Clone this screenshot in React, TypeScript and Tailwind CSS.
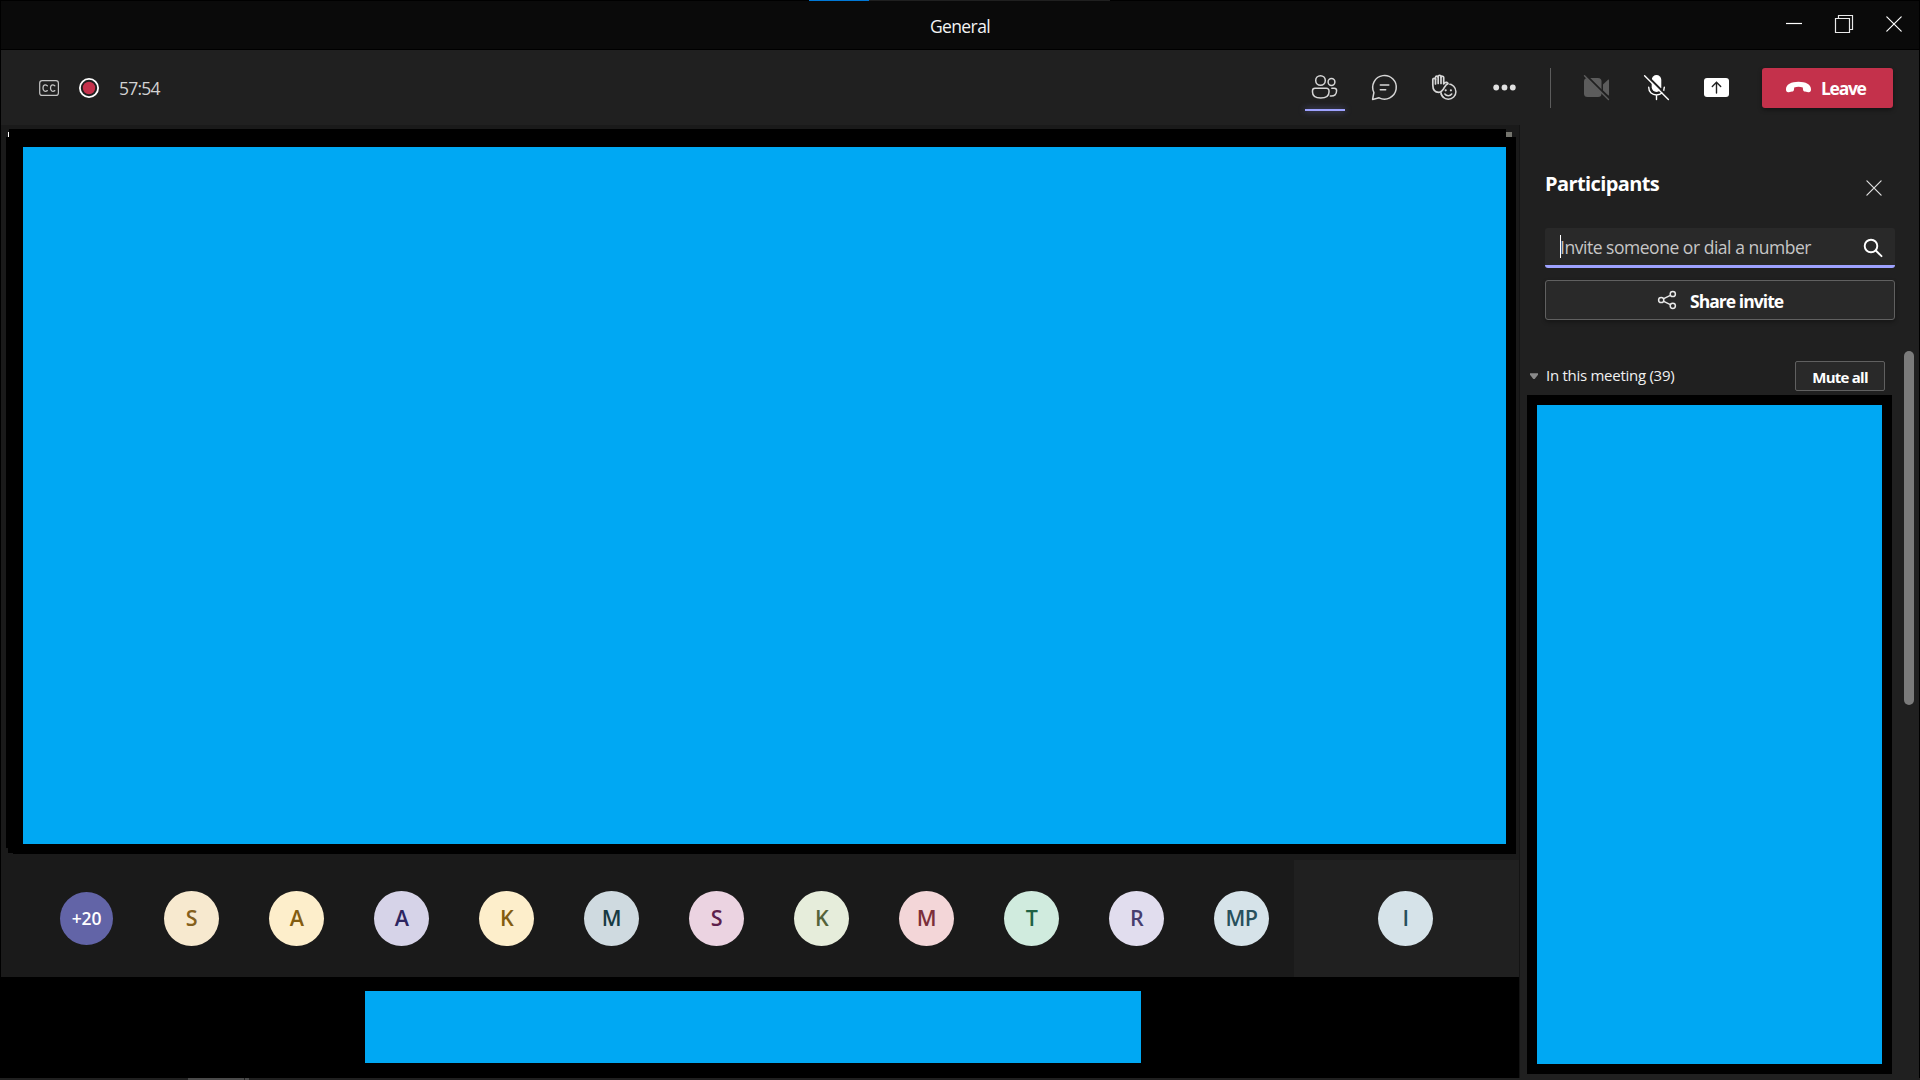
import type { ReactNode } from "react";

type IconProps = { box: string; className?: string; children: ReactNode };

function Icon({ box, className = "size-8", children }: IconProps) {
  return (
    <svg viewBox={box} className={`shrink-0 ${className}`} fill="none" stroke="#d6d6d6" strokeWidth="1.5" strokeLinecap="round" strokeLinejoin="round">
      {children}
    </svg>
  );
}

function TitleBar() {
  return (
    <header className="flex h-[50px] shrink-0 flex-col border-b border-black bg-[#0a0a0a]">
      <div className="flex h-px bg-black">
        <div className="ml-[808px] w-[60px] bg-[#0078d7]" />
        <div className="w-[241px] bg-[#202020]" />
      </div>
      <div className="grid flex-1 grid-cols-[1fr_auto_1fr]">
        <div />
        <h1 className="pt-[13px] text-[17.5px] leading-6 tracking-[-0.6px] text-[#f3f3f3]">General</h1>
        <div className="flex justify-end gap-[18px] pt-[7px] pr-[9px]">
          <Icon box="1778 8 32 32"><path d="M1786 23.5H1802" stroke="#fff" strokeWidth="1.2" strokeLinecap="butt" /></Icon>
          <Icon box="1828 8 32 32">
            <path d="M1835.5 18.5h14v14h-14z M1838.5 18V15.5H1852.5V29.5H1850" stroke="#e8e8e8" strokeWidth="1.2" strokeLinejoin="miter" />
          </Icon>
          <Icon box="1878 8 32 32"><path d="M1886.800 16.800L1901.200 31.200M1901.200 16.800L1886.800 31.200" stroke="#fff" strokeWidth="1.2" /></Icon>
        </div>
      </div>
    </header>
  );
}

function Toolbar() {
  return (
    <div className="flex h-[75px] shrink-0 items-start bg-[#202020] pt-[21px] pr-[26px] pl-[32px]">
      <Icon box="33 71 32 32">
        <rect x="39.700" y="80.700" width="18.700" height="14.700" rx="2.500" stroke="#c4c4c4" strokeWidth="1.200" />
        <path d="M47.300 85.800C45 84 43 85.200 43 88s2 4.200 4.300 2.600M54.800 85.800C52.500 84 50.500 85.200 50.500 88s2 4.200 4.300 2.600" stroke="#c4c4c4" strokeWidth="1.300" />
      </Icon>
      <Icon box="73 71 32 32" className="ml-2 size-8">
        <circle cx="89" cy="88" r="9.100" stroke="#fff" strokeWidth="1.800" />
        <circle cx="89" cy="88" r="6.200" fill="#c4314b" stroke="none" />
      </Icon>
      <span className="ml-[14px] pt-[5px] text-[17.5px] leading-6 tracking-[-0.75px] text-[#d2d2d2]">57:54</span>
      <div className="ml-auto flex items-start">
        <div className="flex gap-7">
          <div className="flex flex-col items-center">
            <Icon box="1309 71 32 32">
              <circle cx="1320.500" cy="80.500" r="4.800" />
              <circle cx="1331.500" cy="82" r="3.400" />
              <path d="M1315 88.200h11.500a2.500 2.500 0 0 1 2.500 2.500v1.300c0 4-3.500 6-8.300 6s-8.200-2-8.200-6v-1.300a2.500 2.500 0 0 1 2.500-2.500zM1331.800 88.200h2.500a2.300 2.300 0 0 1 2.300 2.300c0 3.800-2 5.900-6.300 5.500" />
            </Icon>
            <div className="-mx-1 mt-[6px] h-[2px] w-10 bg-[#9ea2ff] shadow-[0_0_6px_#6264a7]" />
          </div>
          <Icon box="1369 71 32 32">
            <path d="M1373.900 92.500a11.800 11.800 0 1 1 5.200 5.300l-6.500 1.600z M1380.300 84.900h8.500M1380.300 89.800h5.400" />
          </Icon>
          <Icon box="1429 71 32 32">
            <circle cx="1448.300" cy="91.700" r="7.600" />
            <path d="M1444.900 94c1.500 2.300 5.300 2.300 6.800 0" />
            <circle cx="1450.900" cy="90.300" r="1.100" fill="#d6d6d6" stroke="none" />
            <path d="M1432.800 79.500c0-1.700 2.600-1.700 2.700 0v-2.200c.1-1.700 2.600-1.700 2.700 0v-.8c.1-1.700 2.700-1.700 2.800 0v.9c.1-1.600 2.700-1.600 2.700.2v6.200l1.300-1.100c1-.8 2.600-.3 3 .9-1.500.5-2.500 1.800-3.600 3.800-1.600 3-3.200 4.900-5.600 4.900-4 0-6-3.200-6-7.300z" fill="#202020" stroke="#202020" strokeWidth="3" />
            <path d="M1432.800 79.500c0-1.700 2.600-1.700 2.700 0v-2.200c.1-1.700 2.600-1.700 2.700 0v-.8c.1-1.700 2.700-1.700 2.800 0v.9c.1-1.600 2.700-1.600 2.700.2v6.200l1.300-1.100c1-.8 2.600-.3 3 .9-1.500.5-2.500 1.800-3.600 3.800-1.600 3-3.200 4.900-5.600 4.900-4 0-6-3.200-6-7.300z" fill="#202020" strokeWidth="1.700" />
            <path d="M1435.500 79v5M1438.200 77v6.500M1441 77v6.500" strokeWidth="1.700" />
            <circle cx="1445.700" cy="90.300" r="1.100" fill="#d6d6d6" stroke="none" />
            <path d="M1440.900 92.500c.3 2 1.300 3.800 2.700 5" />
          </Icon>
          <Icon box="1489 71 32 32">
            <g fill="#e0e0e0" stroke="none">
              <circle cx="1496.200" cy="87.500" r="2.900" />
              <circle cx="1504.500" cy="87.500" r="2.900" />
              <circle cx="1512.800" cy="87.500" r="2.900" />
            </g>
          </Icon>
        </div>
        <div className="-mt-[3px] mr-[30px] ml-[29px] h-10 w-px bg-[#5c5c5c]" />
        <div className="flex gap-7">
          <Icon box="1581 71 32 32">
            <g fill="#5c5c5c" stroke="none">
              <rect x="1584" y="78" width="17.500" height="19" rx="3.500" />
              <path d="M1603 84.500l5-4.700c.5-.4 1-.2 1 .5v14.400c0 .7-.5.900-1 .5l-5-4.700z" />
            </g>
            <path d="M1585.500 74.700l24.500 24.500" stroke="#202020" strokeWidth="2.200" />
            <path d="M1584.500 75.700l24 23.800" stroke="#5c5c5c" strokeWidth="1.400" />
          </Icon>
          <Icon box="1641 71 32 32">
            <rect x="1651.700" y="75" width="9.600" height="17" rx="4.800" fill="#fff" stroke="none" />
            <path d="M1648.700 87.300c0 5 3.600 7.700 7.800 7.700s7.800-2.700 7.800-7.700M1656.500 95.300v4.300" stroke="#fff" strokeWidth="1.400" />
            <path d="M1646 74.700l24 24" stroke="#202020" strokeWidth="2.200" />
            <path d="M1644.600 75.700l23.800 23.800" stroke="#fff" strokeWidth="1.400" />
          </Icon>
          <Icon box="1701 71 32 32">
            <rect x="1704" y="78" width="25" height="19" rx="3" fill="#fff" stroke="none" />
            <path d="M1716.500 93V82.300M1712.300 86.500l4.200-4.300 4.200 4.300" stroke="#202020" strokeWidth="1.400" />
          </Icon>
        </div>
        <button className="-mt-[3px] ml-[29px] flex h-10 w-[131px] rounded-[3px] bg-[#c4314b] pt-[3px] pl-5 text-white shadow-[0_2px_4px_#00000066]">
          <Icon box="1782 71 32 32">
            <path d="M1786 89.500c-.3-5 5.500-7.700 12.500-7.700s12.800 2.700 12.500 7.700c0 2-1 3-2.800 2.700l-3.200-.6c-1.200-.2-1.900-1-2-2.200l-.2-2c-2.800-.9-5.800-.9-8.600 0l-.2 2c-.1 1.200-.8 2-2 2.200l-3.200.6c-1.800.3-2.800-.7-2.800-2.700z" fill="#fff" stroke="none" />
          </Icon>
          <span className="ml-[7px] pt-[5px] text-[17.5px] leading-6 font-bold tracking-[-1.3px]">Leave</span>
        </button>
      </div>
    </div>
  );
}

const people = [
  { text: "S", style: "bg-[#f7e9cf] text-[#85601c]" },
  { text: "A", style: "bg-[#fdeecb] text-[#835c10]" },
  { text: "A", style: "bg-[#d6d3e8] text-[#2d2560]" },
  { text: "K", style: "bg-[#fdeecb] text-[#835c10]" },
  { text: "M", style: "bg-[#cfdae0] text-[#173a42]" },
  { text: "S", style: "bg-[#ebd3e1] text-[#5e1f4c]" },
  { text: "K", style: "bg-[#e6eddb] text-[#55633a]" },
  { text: "M", style: "bg-[#f3d6d8] text-[#7c2f3a]" },
  { text: "T", style: "bg-[#d0ebde] text-[#1f6244]" },
  { text: "R", style: "bg-[#e1ddee] text-[#473e6e]" },
  { text: "MP", style: "bg-[#d6e3e9] text-[#28505c]" },
];

function Avatar({ text, style }: { text: string; style: string }) {
  return (
    <div className={`flex size-[55px] shrink-0 items-center justify-center rounded-full text-[21.5px] leading-none font-semibold tracking-[-0.5px] ${style}`}>
      <span className="-mt-px">{text}</span>
    </div>
  );
}

function Stage() {
  return (
    <main className="flex w-[1518px] shrink-0 flex-col bg-[#1a1a1a]">
      <div className="mt-1 ml-[5px] h-[725px] w-[1510px] bg-black">
        <div className="flex h-[18px] items-start justify-between">
          <div className="flex h-2 w-[3px] items-start justify-end bg-[#1a1a1a] pt-[3px]">
            <div className="h-[5px] w-px bg-white" />
          </div>
          <div className="h-2 w-[10px] bg-[#1a1a1a] pt-[3px]">
            <div className="h-[5px] w-[6px] bg-[#74746d]" />
          </div>
        </div>
        <div className="ml-[17px] h-[697px] w-[1483px] bg-[#00a8f3]" />
        <div className="mt-1 h-[5px] w-[2px] bg-[#1a1a1a]" />
        <div className="h-px w-[7px] bg-[#1a1a1a]" />
      </div>
      <div className="flex h-[123px] shrink-0 items-end">
        <div className="flex h-[117px] w-[1293px] gap-[50px] pt-[31px] pl-[59px]">
          <div className="mt-px mr-px flex size-[53px] shrink-0 items-center justify-center rounded-full bg-[#6264a7] text-[17.5px] font-semibold tracking-[-0.1px] text-white">+20</div>
          {people.map((p, i) => <Avatar key={i} {...p} />)}
        </div>
        <div className="flex h-[117px] flex-1 justify-center bg-[#202020] pt-[30.5px] pr-[2px]">
          <Avatar text="I" style="bg-[#d6e3e9] text-[#28505c]" />
        </div>
      </div>
      <div className="h-[101px] bg-black pt-[14px] pl-[364px]">
        <div className="h-[72px] w-[776px] bg-[#00a8f3]" />
      </div>
    </main>
  );
}

function Participants() {
  return (
    <aside className="flex min-w-0 flex-1 flex-col border-l border-[#131313] bg-[#202020]">
      <div className="flex h-[103px] shrink-0 justify-between pt-[46px] pr-[28px] pl-[25px]">
        <h2 className="text-[20px] leading-[26px] font-bold tracking-[-0.6px] text-white">Participants</h2>
        <Icon box="1859 171 32 32"><path d="M1866.900 180.900l14.200 14.200M1881.100 180.900l-14.200 14.200" stroke="#e0e0e0" strokeWidth="1.200" /></Icon>
      </div>
      <div className="ml-[25px] flex h-10 w-[350px] shrink-0 rounded-[3px] border-b-[3px] border-[#9ea2ff] bg-[#292929] pl-[15px]">
        <div className="mt-[7px] h-[23px] w-px bg-white" />
        <span className="-ml-px pt-[7px] text-[17.5px] leading-6 tracking-[-0.47px] text-[#c6c6c6]">Invite someone or dial a number</span>
        <Icon box="1857 232 32 32" className="mt-1 mr-[6px] ml-auto size-8">
          <circle cx="1871" cy="246" r="6.300" stroke="#fff" strokeWidth="1.900" />
          <path d="M1875.800 250.500l5.700 5.700" stroke="#fff" strokeWidth="1.900" />
        </Icon>
      </div>
      <button className="mt-3 ml-[25px] flex h-10 w-[350px] shrink-0 rounded-[3px] border border-[#606060] bg-[#292929] pl-[104px] shadow-[0_2px_4px_#00000055]">
        <Icon box="1650 284 32 32" className="mt-[3px] size-8">
          <g strokeWidth="1.500" stroke="#e8e8e8">
            <circle cx="1661.200" cy="300" r="2.600" />
            <circle cx="1672.800" cy="294" r="2.600" />
            <circle cx="1672.800" cy="305.800" r="2.600" />
            <path d="M1663.700 298.700l6.700-3.400M1663.700 301.300l6.700 3.300" />
          </g>
        </Icon>
        <span className="ml-2 pt-[8px] text-[17.5px] leading-6 font-bold tracking-[-0.95px] text-white">Share invite</span>
      </button>
      <div className="flex min-h-0 flex-1 pt-[31px]">
        <div className="ml-[7px] flex w-[365px] flex-col">
          <div className="mt-[10px] flex h-[34px]">
            <svg viewBox="0 0 8 6" className="mt-3 ml-[3px] h-[6px] w-2"><path d="M0 0.300h8v1.500L4.700 6H3.300L0 1.800z" fill="#8a8a8a" /></svg>
            <span className="ml-[8px] pt-[2px] text-[15px] leading-6 tracking-[-0.27px] text-[#f0f0f0]">In this meeting (39)</span>
            <button className="ml-auto mr-[7px] h-[30px] w-[90px] rounded-[2px] border border-[#606060] bg-[#292929] pt-[2px] text-[15px] leading-6 font-bold tracking-[-0.75px] text-white">Mute all</button>
          </div>
          <div className="h-[679px] bg-black p-[10px]">
            <div className="h-full bg-[#00a8f3]" />
          </div>
        </div>
        <div className="ml-3 h-[354px] w-[10px] rounded-full bg-[#7b7b7b]" />
      </div>
    </aside>
  );
}

export default function App() {
  return (
    <div className="flex h-[1080px] w-[1920px] flex-col overflow-hidden bg-black font-['Open_Sans','Noto_Sans',sans-serif]">
      <div className="flex h-[1078px] flex-col border-x border-black">
        <TitleBar />
        <Toolbar />
        <div className="flex min-h-0 flex-1">
          <Stage />
          <Participants />
        </div>
      </div>
      <footer className="flex h-[2px] bg-[#202020]">
        <div className="ml-[188px] w-14 bg-[#4a4a4a]" />
        <div className="ml-px w-1 bg-[#4a4a4a]" />
      </footer>
    </div>
  );
}
